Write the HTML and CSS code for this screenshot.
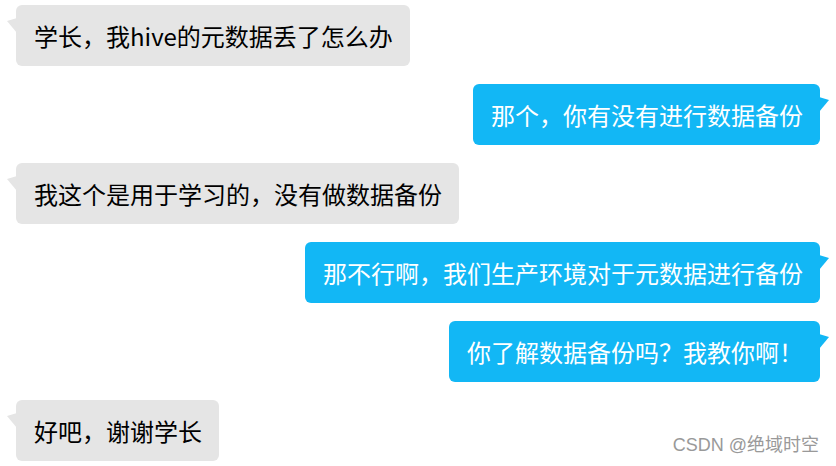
FILE: index.html
```html
<!DOCTYPE html>
<html lang="zh">
<head>
<meta charset="utf-8">
<link rel="stylesheet" href="styles.css">
</head>
<body>
<div class="chat">
  <div class="msg left"><div class="bubble">学长，我hive的元数据丢了怎么办</div></div>
  <div class="msg right"><div class="bubble">那个，你有没有进行数据备份</div></div>
  <div class="msg left"><div class="bubble">我这个是用于学习的，没有做数据备份</div></div>
  <div class="msg right"><div class="bubble">那不行啊，我们生产环境对于元数据进行备份</div></div>
  <div class="msg right"><div class="bubble">你了解数据备份吗？我教你啊！</div></div>
  <div class="msg left"><div class="bubble">好吧，谢谢学长</div></div>
  <div class="watermark">CSDN @绝域时空</div>
</div>
</body>
</html>
```
FILE: styles.css
```css
html, body {
  margin: 0;
  padding: 0;
  background: #ffffff;
}
.chat {
  position: relative;
  width: 836px;
  height: 466px;
  box-sizing: border-box;
  padding: 5px 16px 0 16px;
  display: flex;
  flex-direction: column;
  gap: 18px;
  font-family: "Noto Sans CJK SC", "Noto Sans", sans-serif;
  font-size: 24px;
}
.msg {
  display: flex;
}
.msg.left { justify-content: flex-start; }
.msg.right { justify-content: flex-end; }
.bubble {
  position: relative;
  line-height: 35px;
  padding: 13px 17px 13px 18px;
  border-radius: 6px;
  white-space: nowrap;
}
.left .bubble {
  background: #e5e5e5;
  color: #000000;
}
.right .bubble {
  background: #12b7f5;
  color: #ffffff;
}
.bubble::before {
  content: "";
  position: absolute;
  top: 13px;
  width: 10px;
  height: 15px;
}
.left .bubble::before {
  left: -9px;
  background: #e5e5e5;
  clip-path: polygon(0 20%, 100% 0, 100% 100%);
}
.right .bubble::before {
  right: -9px;
  background: #12b7f5;
  clip-path: polygon(100% 20%, 0 0, 0 100%);
}
.watermark {
  position: absolute;
  right: 17px;
  bottom: 10px;
  line-height: 22px;
  font-family: "Liberation Sans", "Noto Sans CJK SC", sans-serif;
  font-size: 18px;
  color: #999999;
  text-shadow: 0 0 1px #ffffff;
}
```
